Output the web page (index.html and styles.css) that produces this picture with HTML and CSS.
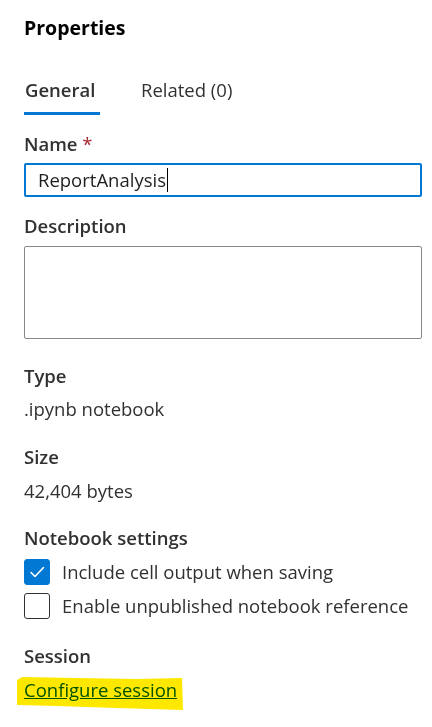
FILE: index.html
```html
<!DOCTYPE html>
<html lang="en">
<head>
<meta charset="utf-8">
<title>Properties</title>
<link rel="stylesheet" href="styles.css">
</head>
<body>
<div class="panel">
  <h1 class="title">Properties</h1>
  <div class="tabs">
    <div class="tab active">General</div>
    <div class="tab">Related (0)</div>
  </div>

  <div class="field name">
    <label class="label">Name <span class="req">*</span></label>
    <div class="input"><span class="value">ReportAnalysis</span><span class="caret"></span></div>
  </div>

  <div class="field desc">
    <label class="label">Description</label>
    <div class="textarea"></div>
  </div>

  <div class="field type">
    <div class="label">Type</div>
    <div class="text">.ipynb notebook</div>
  </div>

  <div class="field size">
    <div class="label">Size</div>
    <div class="text">42,404 bytes</div>
  </div>

  <div class="field settings">
    <div class="label">Notebook settings</div>
    <div class="checks">
      <div class="check">
        <span class="box checked"><svg viewBox="0 0 26 26" width="26" height="26"><path d="M7 13.5 L11 17.5 L19.5 8.5" fill="none" stroke="#fff" stroke-width="1.6" stroke-linecap="round" stroke-linejoin="round"/></svg></span>
        <span class="check-label">Include cell output when saving</span>
      </div>
      <div class="check">
        <span class="box"></span>
        <span class="check-label">Enable unpublished notebook reference</span>
      </div>
    </div>
  </div>

  <div class="field session">
    <div class="label">Session</div>
    <div class="link-wrap">
      <a class="link" href="#">Configure session</a>
      <svg class="marker" viewBox="0 0 166 34" width="166" height="34"><path d="M0 3 L5 0 L60 1 L120 2 L165 1 L166 33 L100 31 L40 29 L0 28 Z" fill="#ffe800"/></svg>
    </div>
  </div>
</div>
</body>
</html>
```

FILE: styles.css
```css
* { box-sizing: border-box; }
html, body { margin: 0; padding: 0; background: #fff; }
body {
  font-family: "Open Sans", "Noto Sans", Arial, sans-serif;
  color: #323130;
  width: 432px;
  height: 727px;
  overflow: hidden;
}
.panel {
  padding: 13px 10px 0 24px;
  display: flex;
  flex-direction: column;
}
.title {
  margin: 0;
  font-size: 19.5px;
  font-weight: 700;
  color: #000;
  line-height: 30px;
}
.tabs {
  display: flex;
  gap: 41px;
  margin-top: 34px;
}
.tab {
  font-size: 18.5px;
  line-height: 26px;
  padding-bottom: 9px;
  border-bottom: 3px solid transparent;
}
.tab.active {
  border-bottom-color: #0078d4;
  font-weight: 600;
  min-width: 76px;
  padding-left: 1px;
}
.field { display: flex; flex-direction: column; }
.label {
  font-size: 18.5px;
  font-weight: 600;
  line-height: 26px;
}
.req { color: #a4262c; font-weight: 400; }
.field.name { margin-top: 16px; }
.input {
  margin-top: 6px;
  height: 34px;
  border: 2px solid #0078d4;
  border-radius: 2px;
  display: flex;
  align-items: center;
  padding-left: 12px;
  font-size: 18.5px;
  line-height: 26px;
  color: #201f1e;
}
.caret { width: 1px; height: 24px; background: #000; margin-left: 1px; }
.field.desc { margin-top: 16px; }
.textarea {
  margin-top: 7px;
  height: 93px;
  border: 1px solid #8a8886;
  border-radius: 2px;
}
.field.type { margin-top: 24px; }
.field.size { margin-top: 22px; }
.text {
  font-size: 18.5px;
  line-height: 26px;
}
.field.type .text { margin-top: 7px; }
.field.size .text { margin-top: 8px; }
.field.settings { margin-top: 21px; }
.checks { display: flex; flex-direction: column; gap: 8px; margin-top: 8px; }
.check { display: flex; align-items: center; gap: 12px; }
.box {
  width: 26px; height: 26px;
  border: 1px solid #323130;
  border-radius: 3px;
  display: block;
  flex: none;
}
.box svg { display: block; margin: -1px; }
.box.checked { background: #0078d4; border-color: #0078d4; }
.check-label { font-size: 18.5px; line-height: 26px; }
.field.session { margin-top: 24px; }
.link-wrap { position: relative; margin-top: 8px; align-self: flex-start; }
.link {
  font-size: 18.5px;
  line-height: 26px;
  color: #005a9e;
  text-decoration: underline;
  display: block;
}
.marker {
  position: absolute;
  left: -7px;
  top: 0;
  mix-blend-mode: multiply;
  pointer-events: none;
}
```
